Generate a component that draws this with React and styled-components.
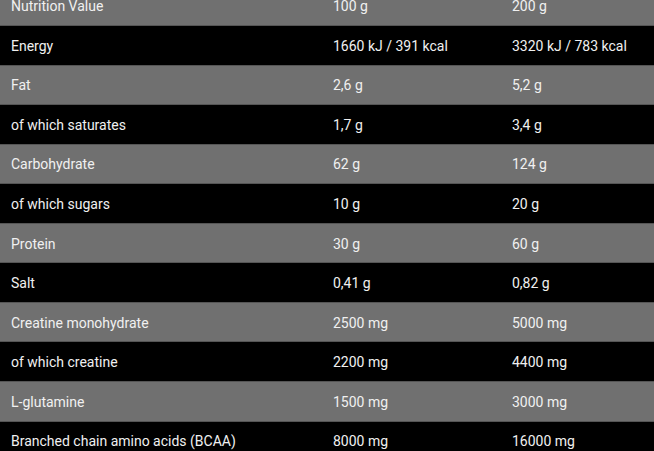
import React from "react";
import styled, { createGlobalStyle } from "styled-components";

const Global = createGlobalStyle`
  html, body { margin: 0; padding: 0; background: #000; overflow: hidden; }
  body { font-family: Roboto, "Liberation Sans", Arial, sans-serif; }
`;

const Table = styled.div`
  width: 654px;
  margin-top: -13.5px;
  display: flex;
  flex-direction: column;
`;

const Row = styled.div`
  display: grid;
  grid-template-columns: 322px 179px 1fr;
  height: 39.55px;
  box-sizing: border-box;
  align-items: center;
  background: ${(p) => (p.$dark ? "#000" : "#707070")};
  border-bottom: 1px solid #555;
`;

const Cell = styled.div`
  padding-left: 11px;
  padding-top: 1px;
  font-size: 14px;
  line-height: 20px;
  color: #f0f0f0;
  white-space: nowrap;
`;

const rows = [
  ["Nutrition Value", "100 g", "200 g"],
  ["Energy", "1660 kJ / 391 kcal", "3320 kJ / 783 kcal"],
  ["Fat", "2,6 g", "5,2 g"],
  ["of which saturates", "1,7 g", "3,4 g"],
  ["Carbohydrate", "62 g", "124 g"],
  ["of which sugars", "10 g", "20 g"],
  ["Protein", "30 g", "60 g"],
  ["Salt", "0,41 g", "0,82 g"],
  ["Creatine monohydrate", "2500 mg", "5000 mg"],
  ["of which creatine", "2200 mg", "4400 mg"],
  ["L-glutamine", "1500 mg", "3000 mg"],
  ["Branched chain amino acids (BCAA)", "8000 mg", "16000 mg"],
];

export default function App() {
  return (
    <>
      <Global />
      <Table>
        {rows.map((r, i) => (
          <Row key={i} $dark={i % 2 === 1}>
            {r.map((c, j) => (
              <Cell key={j}>{c}</Cell>
            ))}
          </Row>
        ))}
      </Table>
    </>
  );
}
